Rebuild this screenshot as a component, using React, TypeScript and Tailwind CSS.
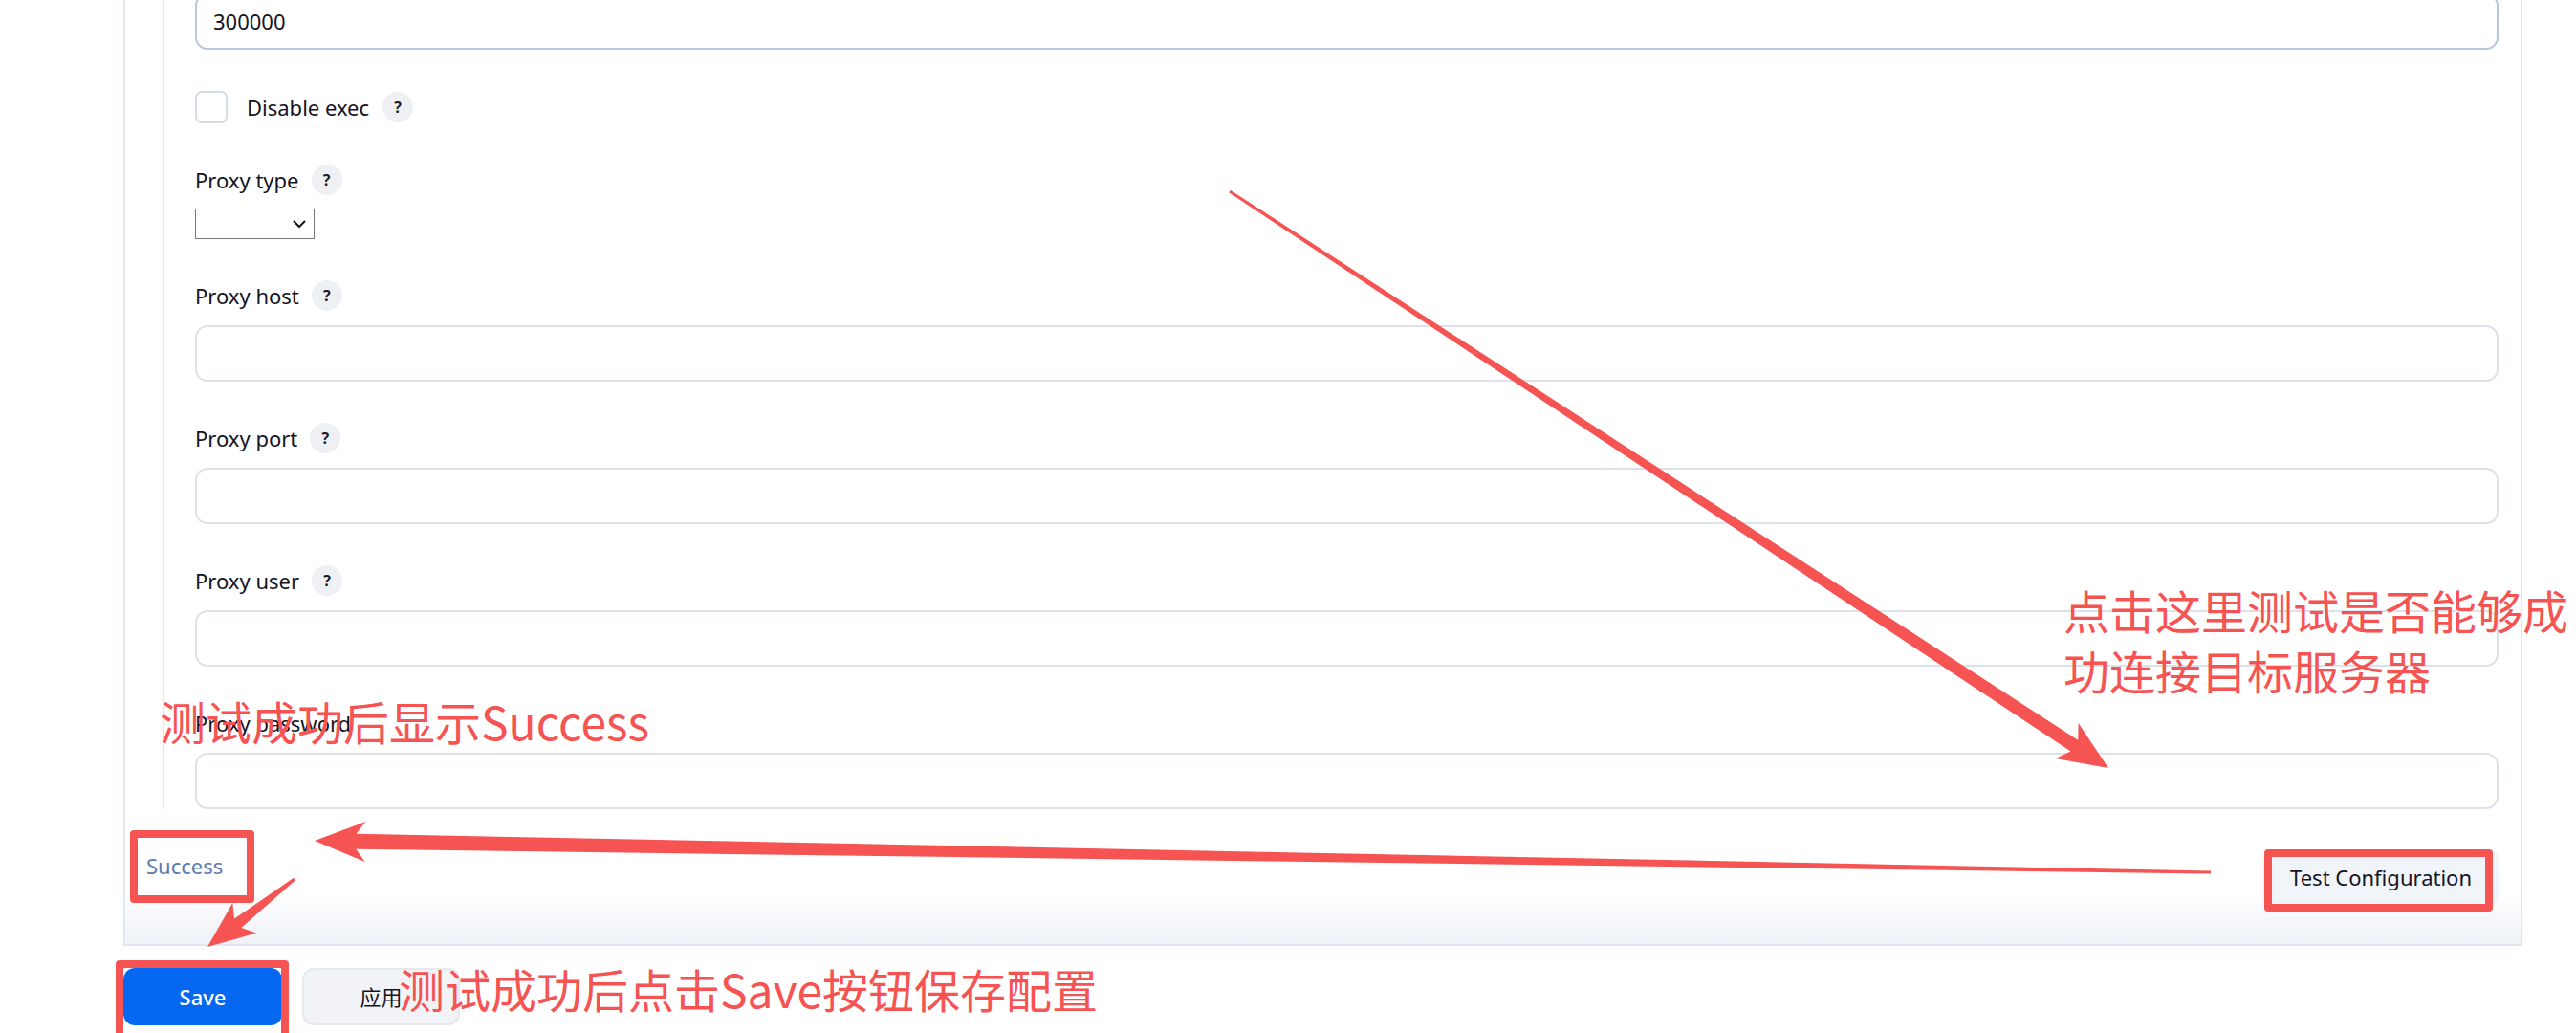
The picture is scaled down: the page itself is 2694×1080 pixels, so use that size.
import React from "react";

type Pt = [number, number];

function arrowPoints(T: Pt, P: Pt, wt: number, ws: number, hl: number, hw: number): string {
  const dx = P[0] - T[0];
  const dy = P[1] - T[1];
  const len = Math.hypot(dx, dy);
  const ux = dx / len;
  const uy = dy / len;
  const nx = -uy;
  const ny = ux;
  const B: Pt = [P[0] - ux * hl, P[1] - uy * hl];
  const notch = hl * 0.18;
  const N: Pt = [B[0] + ux * notch, B[1] + uy * notch];
  const pts: Pt[] = [
    [T[0] + (nx * wt) / 2, T[1] + (ny * wt) / 2],
    [N[0] + (nx * ws) / 2, N[1] + (ny * ws) / 2],
    [B[0] + (nx * hw) / 2, B[1] + (ny * hw) / 2],
    P,
    [B[0] - (nx * hw) / 2, B[1] - (ny * hw) / 2],
    [N[0] - (nx * ws) / 2, N[1] - (ny * ws) / 2],
    [T[0] - (nx * wt) / 2, T[1] - (ny * wt) / 2],
  ];
  return pts.map((p) => `${p[0].toFixed(1)},${p[1].toFixed(1)}`).join(" ");
}

function Help() {
  return (
    <span className="ml-[13px] flex h-[32px] w-[32px] items-center justify-center rounded-full bg-[#eef0f4] text-[16px] font-bold text-[#1b1b25]">
      ?
    </span>
  );
}

function Label({ text }: { text: string }) {
  return (
    <div className="flex h-[32px] items-center">
      <span className="text-[22px] leading-[32px] text-[#14141f]">{text}</span>
      <Help />
    </div>
  );
}

function TextInput({ value, focused }: { value?: string; focused?: boolean }) {
  return (
    <div
      className={
        focused
          ? "flex h-[59px] items-center rounded-[13px] border-2 border-[#b9c5d8] bg-white px-[17px] text-[22px] text-[#14141f]"
          : "flex h-[59px] items-center rounded-[13px] border-2 border-[#dde1ea] bg-white px-[17px] text-[22px] text-[#14141f]"
      }
    >
      {value}
    </div>
  );
}

export default function App() {
  const red = "#f65353";
  return (
    <div
      className="relative h-[1080px] w-[2694px] overflow-hidden bg-white"
      style={{ fontFamily: '"Noto Sans", "Noto Sans CJK SC", sans-serif' }}
    >
      {/* Panel */}
      <div className="ml-[129px] mt-[-7px] w-[2509px] border-x-2 border-b-2 border-[#e1e6ef]">
        <div className="ml-[39px] flex flex-col gap-[43px] border-l-2 border-[#e1e6ef] pl-[32px] pr-[23px]">
          <TextInput value="300000" focused />

          <div className="flex h-[34px] items-center">
            <span className="h-[34px] w-[34px] rounded-[7px] border-2 border-[#d5dbe7] bg-white" />
            <span className="ml-[20px] text-[22px] text-[#14141f]">Disable exec</span>
            <span className="ml-[1px]">
              <Help />
            </span>
          </div>

          <div className="flex flex-col">
            <Label text="Proxy type" />
            <div className="mt-[14px] flex h-[32px] w-[125px] items-center justify-end border border-[#767676] bg-white pr-[7px]">
              <svg width="16" height="10" viewBox="0 0 16 10">
                <path d="M2 2 L8 8 L14 2" fill="none" stroke="#111" strokeWidth="2" />
              </svg>
            </div>
          </div>

          <div className="flex flex-col">
            <Label text="Proxy host" />
            <div className="mt-[15px]">
              <TextInput />
            </div>
          </div>

          <div className="flex flex-col">
            <Label text="Proxy port" />
            <div className="mt-[15px]">
              <TextInput />
            </div>
          </div>

          <div className="flex flex-col">
            <Label text="Proxy user" />
            <div className="mt-[15px]">
              <TextInput />
            </div>
          </div>

          <div className="flex flex-col">
            <div className="flex h-[32px] items-center">
              <span className="text-[22px] leading-[32px] text-[#14141f]">Proxy password</span>
            </div>
            <div className="mt-[15px]">
              <TextInput />
            </div>
          </div>
        </div>

        {/* Footer row */}
        <div className="flex items-start justify-between bg-linear-to-b from-white from-60% to-[#eef1f6] pb-[40px] pl-[22px] pr-[23px] pt-[42px]">
          <span className="text-[22px] leading-[34px] text-[#5b7bb0]">Success</span>
          <button className="flex h-[59px] w-[246px] items-center justify-center rounded-[10px] bg-[#f1f4f8] text-[22px] text-[#14141f]">
            Test Configuration
          </button>
        </div>
      </div>

      {/* Bottom buttons */}
      <div className="ml-[129px] mt-[23px] flex gap-[21px]">
        <button className="flex h-[60px] w-[166px] items-center justify-center rounded-[12px] bg-[#0668f0] text-[22px] font-medium text-white">
          Save
        </button>
        <button className="flex h-[60px] w-[165px] items-center justify-center rounded-[12px] border-2 border-[#e5e8ee] bg-[#f1f3f7] text-[22px] text-[#14141f]">
          应用
        </button>
      </div>

      {/* Annotations */}
      <svg className="pointer-events-none absolute left-0 top-0" width="2694" height="1080">
        <polygon points={arrowPoints([1286, 200], [2205, 803], 3, 14, 52, 44)} fill={red} />
        <polygon points={arrowPoints([2312, 912], [329, 879], 3, 16, 53, 42)} fill={red} />
        <polygon points={arrowPoints([308, 919], [217, 990], 3, 12, 49, 40)} fill={red} />
      </svg>

      <div className="pointer-events-none absolute left-[136px] top-[868px] h-[76px] w-[130px] rounded-[4px] border-[8px] border-[#f65353]" />
      <div className="pointer-events-none absolute left-[2368px] top-[888px] h-[65px] w-[239px] rounded-[4px] border-[8px] border-[#f65353]" />
      <div className="pointer-events-none absolute left-[121px] top-[1004px] h-[84px] w-[181px] rounded-[4px] border-[8px] border-[#f65353]" />

      <div
        className="pointer-events-none absolute left-[167px] top-[723px] whitespace-nowrap text-[48px] leading-[60px] text-[#f65353]"
        style={{ fontFamily: '"Noto Sans CJK SC", sans-serif' }}
      >
        测试成功后显示Success
      </div>
      <div
        className="pointer-events-none absolute left-[417px] top-[1003px] whitespace-nowrap text-[48px] leading-[60px] text-[#f65353]"
        style={{ fontFamily: '"Noto Sans CJK SC", sans-serif' }}
      >
        测试成功后点击Save按钮保存配置
      </div>
      <div
        className="pointer-events-none absolute left-[2158px] top-[606px] whitespace-nowrap text-[48px] leading-[63px] text-[#f65353]"
        style={{ fontFamily: '"Noto Sans CJK SC", sans-serif' }}
      >
        点击这里测试是否能够成
        <br />
        功连接目标服务器
      </div>
    </div>
  );
}
